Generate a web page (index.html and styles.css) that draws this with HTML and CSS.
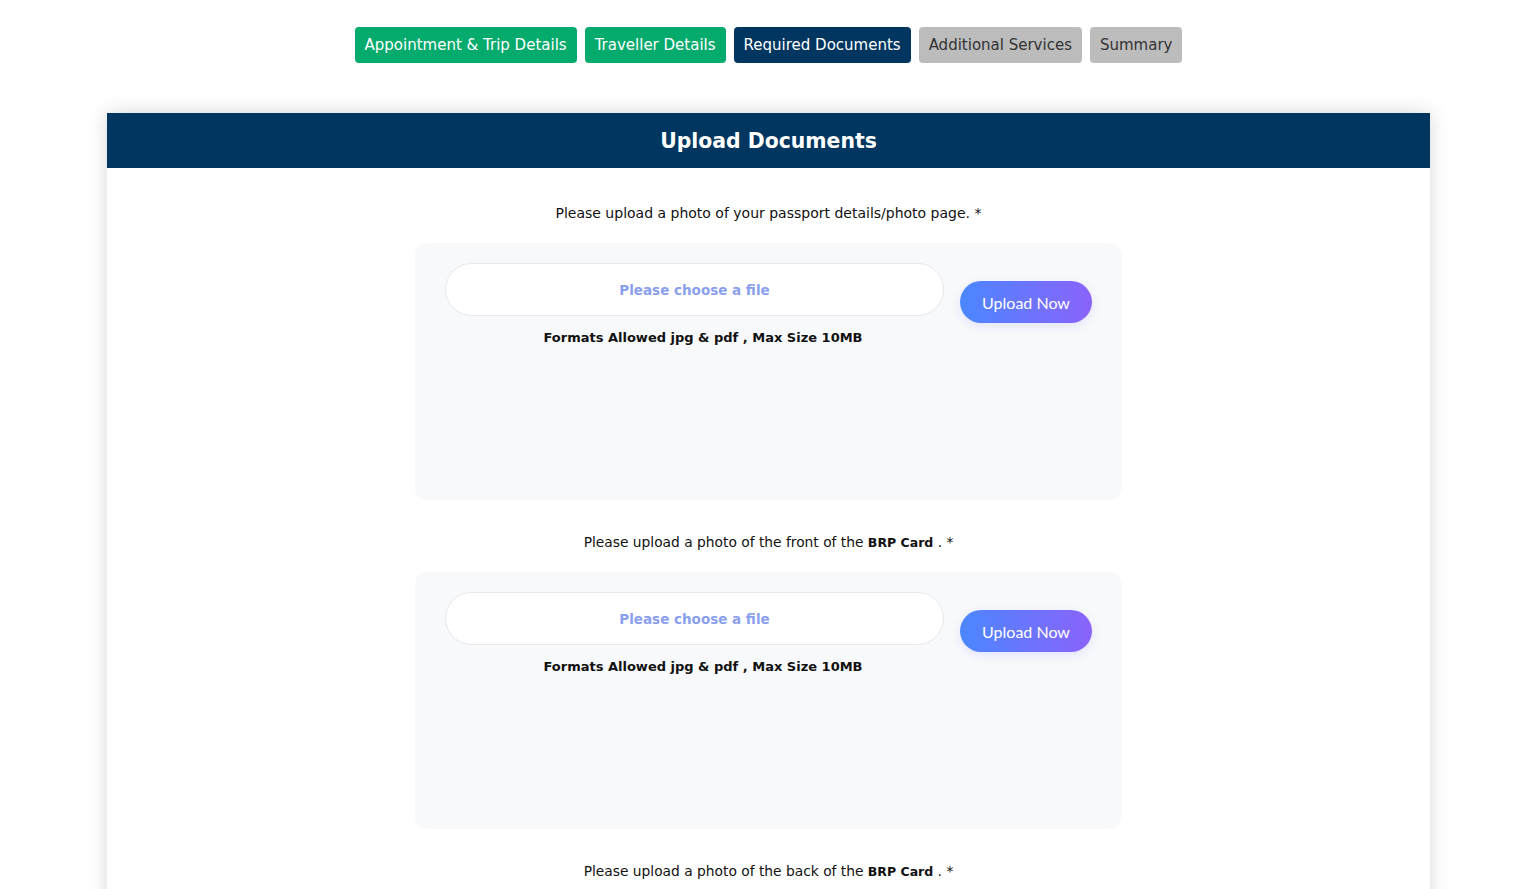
FILE: index.html
```html
<!DOCTYPE html>
<html>
<head>
<meta charset="utf-8">
<link rel="stylesheet" href="styles.css">
</head>
<body>
<nav class="steps">
  <span class="step done">Appointment &amp; Trip Details</span>
  <span class="step done">Traveller Details</span>
  <span class="step active">Required Documents</span>
  <span class="step todo">Additional Services</span>
  <span class="step todo">Summary</span>
</nav>
<main class="card">
  <header class="card-head">Upload Documents</header>
  <div class="card-body">
    <section class="doc">
      <p class="label">Please upload a photo of your passport details/photo page. *</p>
      <div class="box">
        <div class="row">
          <div class="col">
            <div class="file">Please choose a file</div>
            <p class="formats">Formats Allowed jpg &amp; pdf , Max Size 10MB</p>
          </div>
          <button class="upload">Upload Now</button>
        </div>
      </div>
    </section>
    <section class="doc">
      <p class="label tight">Please upload a photo of the front of the <b>BRP Card</b> . *</p>
      <div class="box">
        <div class="row">
          <div class="col">
            <div class="file">Please choose a file</div>
            <p class="formats">Formats Allowed jpg &amp; pdf , Max Size 10MB</p>
          </div>
          <button class="upload">Upload Now</button>
        </div>
      </div>
    </section>
    <section class="doc">
      <p class="label tight">Please upload a photo of the back of the <b>BRP Card</b> . *</p>
      <div class="box">
        <div class="row">
          <div class="col">
            <div class="file">Please choose a file</div>
            <p class="formats">Formats Allowed jpg &amp; pdf , Max Size 10MB</p>
          </div>
          <button class="upload">Upload Now</button>
        </div>
      </div>
    </section>
  </div>
</main>
</body>
</html>
```

FILE: styles.css
```css
* { box-sizing: border-box; }
body {
  margin: 0;
  background: #fff;
  font-family: "DejaVu Sans", "Noto Sans", sans-serif;
  color: #111;
}
.steps {
  display: flex;
  justify-content: center;
  gap: 8px;
  padding-top: 27px;
  padding-left: 1px;
}
.step {
  height: 36px;
  display: flex;
  align-items: center;
  padding: 0 10px;
  border-radius: 4px;
  font-size: 15px;
}
.done { background: #05aa6d; color: #fff; }
.active { background: #00365f; color: #fff; }
.todo { background: #bcbcbc; color: #333; }
.card {
  width: 1323px;
  margin: 50px auto 0 107px;
  background: #fff;
  box-shadow: 0 0 18px rgba(0,0,0,0.16);
}
.card-head {
  height: 55px;
  background: #00365f;
  color: #fff;
  font-weight: bold;
  font-size: 20.4px;
  display: flex;
  align-items: center;
  justify-content: center;
}
.card-body {
  padding: 35px 0 20px;
  display: flex;
  flex-direction: column;
  align-items: center;
}
.doc {
  display: flex;
  flex-direction: column;
  align-items: center;
  width: 707px;
  margin-bottom: 32px;
}
.label {
  margin: 0 0 20px;
  height: 20px;
  font-size: 14px;
  line-height: 20px;
  color: #111;
}
.label.tight { font-size: 13.8px; }
.label b { font-weight: bold; font-size: 12.5px; line-height: 1; }
.box {
  width: 707px;
  height: 257px;
  background: #f8f9fb;
  border-radius: 12px;
  padding: 20px 30px;
}
.row {
  display: flex;
  align-items: flex-start;
  gap: 16px;
}
.col {
  width: 499px;
  display: flex;
  flex-direction: column;
  align-items: center;
}
.file {
  width: 499px;
  height: 53px;
  background: #fff;
  border: 1px solid #e6e8ec;
  border-radius: 27px;
  display: flex;
  align-items: center;
  justify-content: center;
  color: #8aa0ee;
  font-weight: bold;
  font-size: 13.5px;
}
.formats {
  margin: 12px 0 0;
  padding-left: 17px;
  font-size: 13px;
  line-height: 20px;
  font-weight: bold;
  color: #111;
}
.upload {
  margin-top: 18px;
  width: 132px;
  height: 42px;
  border: none;
  border-radius: 21px;
  background: linear-gradient(90deg, #4b87ff, #8a63fb);
  color: #fff;
  font-family: "Lato", sans-serif;
  font-size: 16px;
  box-shadow: 0 3px 10px rgba(100,100,255,0.15);
}
```
